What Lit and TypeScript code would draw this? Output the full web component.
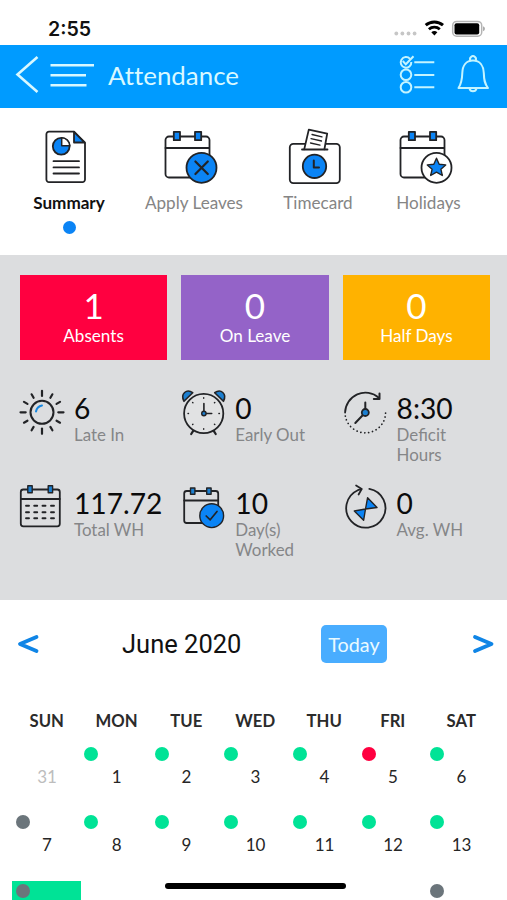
import { LitElement, html, css, svg } from "lit";
import { customElement } from "lit/decorators.js";

const BLUE = "#0b84f5";
const INK = "#222326";

const icon = (x: number, y: number, w: number, h: number, body: unknown) => html`
  <svg width=${w} height=${h} viewBox="${x} ${y} ${w} ${h}" fill="none" stroke=${INK}
    stroke-width="1.8" stroke-linecap="round" stroke-linejoin="round">${body}</svg>`;

const range = (n: number) => Array.from({ length: n }, (_, i) => i);

const calendarBase = svg`
  <rect x="165.5" y="136.5" width="44" height="41" rx="3.5"/>
  <path d="M165.5 148H209"/>
  <rect x="173.8" y="131.8" width="6.2" height="8.4" fill=${BLUE}/>
  <rect x="195" y="131.8" width="6.2" height="8.4" fill=${BLUE}/>`;

const tabs = [
  {
    label: "Summary",
    active: true,
    icon: icon(43, 126, 52, 60, svg`
      <path d="M49 131.6H74L85 143V179.5a2.6 2.6 0 0 1-2.6 2.6H49a2.6 2.6 0 0 1-2.6-2.6V134.2a2.6 2.6 0 0 1 2.6-2.6z"/>
      <path d="M74 131.8V142.5H84.8z" fill=${BLUE}/>
      <circle cx="61.2" cy="146.3" r="8.4" fill=${BLUE}/>
      <path d="M61.7 137.7V145.8H69.8A8.4 8.4 0 0 0 61.7 137.7z" fill="#fff" stroke-width="1.5"/>
      <path d="M53.5 161.2H79M53.5 167.4H79M53.5 173.5H79"/>`),
  },
  {
    label: "Apply Leaves",
    icon: icon(163, 126, 62, 60, svg`
      ${calendarBase}
      <circle cx="201.5" cy="167.8" r="15" fill=${BLUE}/>
      <path d="M195.4 161.5L207.8 174M207.8 161.5L195.4 174" stroke-width="2.2"/>`),
  },
  {
    label: "Timecard",
    icon: icon(287, 126, 62, 60, svg`
      <rect x="289.8" y="143.8" width="50" height="39.3" rx="3.5"/>
      <path d="M304.2 149.4L308.8 129.6L327.2 133.6L324.4 149.4" fill="#fff"/>
      <path d="M302 149.5H327.5"/>
      <path d="M312 134.5L322 136.8M311 138.7L321.5 141M310.5 143L320 145.2" stroke-width="1.3"/>
      <circle cx="314.5" cy="166.3" r="11.7" fill=${BLUE}/>
      <path d="M313.8 160.5V167.5H319" stroke-width="2"/>`),
  },
  {
    label: "Holidays",
    icon: icon(397.5, 126, 62, 60, svg`
      <g transform="translate(234.5 0)">${calendarBase}</g>
      <circle cx="436" cy="167.8" r="15" fill="#fff"/>
      <path d="M436 158.2L438.7 164.2L445.2 164.9L440.4 169.2L441.8 175.5L436 172.2L430.2 175.5L431.6 169.2L426.8 164.9L433.3 164.2z" fill=${BLUE} stroke-width="1.4"/>`),
  },
];

const cards = [
  { value: "1", label: "Absents", tone: "red" },
  { value: "0", label: "On Leave", tone: "purple" },
  { value: "0", label: "Half Days", tone: "amber" },
];

const stats = [
  {
    value: "6",
    label: "Late In",
    icon: icon(18, 387, 52, 50, svg`
      <circle cx="42" cy="412.3" r="11.5" stroke-width="2"/>
      <path d="M36 411.5A7.5 7.5 0 0 1 42 405.5" stroke="#1687e0" stroke-width="2"/>
      ${range(12).map((i) => svg`<path d=${i % 3 ? "M42 395.5V391.5" : "M42 396V390.8"} stroke-width="2.2" transform="rotate(${i * 30} 42 412.3)"/>`)}`),
  },
  {
    value: "0",
    label: "Early Out",
    icon: icon(179.3, 387, 52, 50, svg`
      <path d="M184.3 401.3C180.3 393.5 187 388.5 193 392.7z" fill="#1c7fd0" stroke-width="1.6"/>
      <path d="M223.7 401.3C227.7 393.5 221 388.5 215 392.7z" fill="#1c7fd0" stroke-width="1.6"/>
      <path d="M193.5 430.8L191.5 434M214 430.8L216 434" stroke-width="2.2"/>
      <circle cx="204" cy="413.5" r="19.6" fill="#e1e2e3"/>
      ${range(8).map((i) => svg`<path d="M204 397.8V398.3" stroke-width="1.4" transform="rotate(${i * 45} 204 413.5)"/>`)}
      <path d="M204.2 403.5V413.5H212" stroke-width="1.6"/>
      <circle cx="204.2" cy="413.5" r="2.2" fill="#1c7fd0" stroke-width="1.4"/>`),
  },
  {
    value: "8:30",
    label: "Deficit Hours",
    icon: icon(340.7, 387, 52, 50, svg`
      <path d="M344.8 412.5A20.3 20.3 0 0 1 378.5 397.7"/>
      <path d="M379.2 393.5V399H373.5" stroke-width="2"/>
      <path d="M345 416A20.3 20.3 0 0 0 385.3 412.5" stroke-width="1.7" stroke-dasharray="0.1 3.85"/>
      <path d="M365 402.5V412.5L355 423" stroke-width="2"/>
      <circle cx="365" cy="412.5" r="3.5" fill="#1c7fd0"/>`),
  },
  {
    value: "117.72",
    label: "Total WH",
    icon: icon(18, 482, 52, 50, svg`
      <rect x="20.8" y="489.5" width="39" height="36.8" rx="2.5"/>
      <path d="M20.8 499H59.8"/>
      <rect x="27.8" y="485.8" width="4.4" height="7" fill="#1c7fd0" stroke-width="1.4"/>
      <rect x="48.2" y="485.8" width="4.4" height="7" fill="#1c7fd0" stroke-width="1.4"/>
      ${[505.8, 512.2, 518.3].map((y) => svg`<path d="M26 ${y}H29M34.2 ${y}H37.2M42.5 ${y}H45.5M51 ${y}H54" stroke-width="1.9"/>`)}`),
  },
  {
    value: "10",
    label: "Day(s) Worked",
    icon: icon(179.3, 482, 52, 50, svg`
      <rect x="184.5" y="491" width="34" height="32" rx="2.5"/>
      <path d="M184.5 500.5H218.5"/>
      <rect x="190.8" y="488" width="4.4" height="6.2" fill="#1c7fd0" stroke-width="1.4"/>
      <rect x="207" y="488" width="4.4" height="6.2" fill="#1c7fd0" stroke-width="1.4"/>
      <circle cx="212" cy="515.7" r="11.9" fill=${BLUE} stroke-width="1.4"/>
      <path d="M206.5 516L210.5 519.8L217.3 511.5" stroke-width="1.7"/>`),
  },
  {
    value: "0",
    label: "Avg. WH",
    icon: icon(340.7, 482, 52, 50, svg`
      <path d="M369 488.8A19.6 19.6 0 1 1 357.5 490.2L361 489.2"/>
      <path d="M355.8 485.5L361.5 488.9L358.3 494.5"/>
      <path d="M367.3 497.7L376.7 507.5L365.2 509L354 511L363.3 520.3L365.2 509z" fill=${BLUE} stroke-width="1.4"/>`),
  },
];

const weekdays = ["SUN", "MON", "TUE", "WED", "THU", "FRI", "SAT"];

type Day = { n?: number; dot?: string; outside?: boolean; today?: boolean };

const days: Day[] = [
  { n: 31, outside: true },
  ...[1, 2, 3, 4].map((n) => ({ n, dot: "green" })),
  { n: 5, dot: "red" },
  { n: 6, dot: "green" },
  { n: 7, dot: "gray" },
  ...[8, 9, 10, 11, 12, 13].map((n) => ({ n, dot: "green" })),
  { dot: "gray", today: true },
  {}, {}, {}, {}, {},
  { dot: "gray" },
];

@customElement("app-root")
export class AppRoot extends LitElement {
  static styles = css`
    :host {
      display: block;
      position: relative;
      width: 507px;
      height: 900px;
      overflow: hidden;
      background: #fff;
      color: #111;
      font-family: Lato, sans-serif;
    }
    svg { display: block; flex: none; }
    .status {
      display: flex;
      align-items: center;
      box-sizing: border-box;
      height: 44.5px;
      padding: 13px 21px 0 48px;
      justify-content: space-between;
    }
    .time { font: 600 19.6px/30px Inter, sans-serif; }
    .bar {
      display: flex;
      align-items: center;
      height: 63.5px;
      padding: 0 15px;
      background: #009bff;
      color: #d8f8ff;
    }
    .title {
      flex: 1;
      margin: -2px 0 0 13px;
      font-size: 25.9px;
      font-variant-ligatures: none;
    }
    .tabs {
      display: grid;
      grid-template-columns: 138px 112px 136px 85px;
      height: 129px;
      padding-top: 18px;
    }
    .tab {
      display: flex;
      flex-direction: column;
      align-items: center;
      color: #858585;
      font-size: 17.1px;
      line-height: 22px;
      white-space: nowrap;
    }
    .tab-label { margin-top: 6px; }
    .active { color: #111; font-weight: 700; }
    .marker { width: 13px; height: 13px; margin-top: 7px; border-radius: 50%; background: #0b84f5; }
    .summary {
      box-sizing: border-box;
      height: 345px;
      padding: 20px 17px 0 20px;
      background: #dcdddf;
    }
    .cards { display: grid; grid-template-columns: repeat(3, 1fr); gap: 14.3px; }
    .card {
      display: flex;
      flex-direction: column;
      align-items: center;
      height: 85px;
      color: #fff;
    }
    .card-value { margin-top: 9px; font-size: 35px; line-height: 42px; }
    .card-label { font-size: 17.1px; line-height: 20px; }
    .red { background: #ff0040; }
    .purple { background: #9463c8; }
    .amber { background: #ffb200; }
    .stats {
      display: grid;
      grid-template-columns: repeat(3, 161.3px);
      grid-auto-rows: 95px;
      margin: 27px 0 0 -2px;
    }
    .stat { display: flex; }
    .stat-text { width: 90px; padding-top: 5px; margin-left: 4px; }
    .stat-value { color: #0b0b0c; font-size: 28.2px; line-height: 32px; }
    .stat-label { margin-top: 1px; color: #858688; font-size: 16.9px; line-height: 20.3px; }
    .month {
      display: flex;
      align-items: center;
      height: 88px;
      padding: 0 13px 0 17px;
    }
    .month-name { width: 199px; margin-left: 83px; font: 25.5px/30px Roboto, sans-serif; }
    .today-btn {
      width: 66px;
      height: 38px;
      margin-right: auto;
      border-radius: 5px;
      background: #49adff;
      color: #e9faff;
      font-size: 19.8px;
      line-height: 39px;
      text-align: center;
    }
    .grid {
      display: grid;
      grid-template-columns: 68.5px 71px 68.5px 69.5px 68.5px 68.5px 68.5px;
      margin-left: 12px;
    }
    .weekdays { height: 56px; align-items: center; text-align: center; font-size: 16.7px; font-weight: 700; color: #2b2b2b; }
    .weekday { padding: 9px 0 0 1px; }
    .days { grid-auto-rows: 68.3px; }
    .day { display: flex; flex-direction: column; color: #262626; font-size: 17px; }
    .dot { width: 14px; height: 14px; margin: 3px 0 0 3.5px; border-radius: 50%; }
    .green { background: #00e396; }
    .gray { background: #6b757b; }
    .num { padding: 6px 0 0 1.5px; text-align: center; line-height: 20px; }
    .outside { color: #bdbdbd; }
    .today { background: #00e396; }
    .home {
      position: absolute;
      left: 165px;
      bottom: 11px;
      width: 181px;
      height: 6px;
      border-radius: 3px;
      background: #000;
    }
  `;

  render() {
    return html`
      <div class="status">
        <span class="time">2:55</span>
        <svg width="94" height="20" viewBox="392 19 94 20" fill="none">
          ${[396.3, 402.4, 408.5, 414.6].map((x) => svg`<circle cx=${x} cy="33.5" r="1.9" fill="#c6c6c6"/>`)}
          <path d="M425.7 25.2A13.1 13.1 0 0 1 443 25.2" stroke="#000" stroke-width="3"/>
          <path d="M428.9 29.2A8.1 8.1 0 0 1 439.8 29.2" stroke="#000" stroke-width="2.8"/>
          <path d="M431.3 32.3A4.5 4.5 0 0 1 437.4 32.3L434.4 35.5z" fill="#000"/>
          <rect x="452.7" y="21.4" width="29" height="14.8" rx="4" stroke="#b4b4b4" stroke-width="1.5"/>
          <rect x="454.5" y="23.2" width="24.7" height="11.2" rx="2" fill="#000"/>
          <path d="M483 26.3Q485 27 485 28.8T483 31.3z" fill="#aaa"/>
        </svg>
      </div>
      <div class="bar">
        <svg width="80" height="44" viewBox="15 54 80 44" fill="none" stroke="#d8f8ff" stroke-width="2.6">
          <path d="M37.5 57L17.5 74.5L37.5 92"/>
          <path d="M50.5 65.2H94M50.5 75.2H86M50.5 85.2H86.5" stroke-width="2.4"/>
        </svg>
        <span class="title">Attendance</span>
        <svg width="95" height="44" viewBox="397 54 95 44" fill="none" stroke="#c4f4ff" stroke-width="2">
          <path d="M410 58.9A5.3 5.3 0 1 0 411.3 62"/>
          <path d="M402.8 61L405.8 64.3L413.5 56.3"/>
          <circle cx="406" cy="74.8" r="5.3"/>
          <circle cx="406" cy="87.3" r="5.3"/>
          <path d="M414.3 62.2H434.3M414.3 75H434.3M414.3 87.3H434.3"/>
          <path d="M470.8 61A2.9 2.9 0 1 1 475.2 61"/>
          <path stroke-linejoin="round" d="M473 60.5C466 60.5 462.5 66 462.3 73C462.1 80 461.5 83.5 458.5 88H488C484.5 83.5 484 80 483.8 73C483.5 66 480 60.5 473 60.5z"/>
          <path d="M469.5 88.5A3.6 3.6 0 0 0 476.5 88.5"/>
        </svg>
      </div>
      <div class="tabs">
        ${tabs.map((t) => html`
          <div class="tab ${t.active ? "active" : ""}">
            ${t.icon}
            <span class="tab-label">${t.label}</span>
            ${t.active ? html`<span class="marker"></span>` : ""}
          </div>`)}
      </div>
      <div class="summary">
        <div class="cards">
          ${cards.map((c) => html`
            <div class="card ${c.tone}">
              <span class="card-value">${c.value}</span>
              <span class="card-label">${c.label}</span>
            </div>`)}
        </div>
        <div class="stats">
          ${stats.map((s) => html`
            <div class="stat">
              ${s.icon}
              <div class="stat-text">
                <div class="stat-value">${s.value}</div>
                <div class="stat-label">${s.label}</div>
              </div>
            </div>`)}
        </div>
      </div>
      <div class="month">
        <svg width="22" height="24" viewBox="17 632 22 24" fill="none" stroke="#0f85e6" stroke-width="3.8" stroke-linecap="round" stroke-linejoin="round">
          <path d="M36.5 637L20 644L36.5 651"/>
        </svg>
        <span class="month-name">June 2020</span>
        <span class="today-btn">Today</span>
        <svg width="22" height="24" viewBox="472 632 22 24" fill="none" stroke="#0f85e6" stroke-width="3.8" stroke-linecap="round" stroke-linejoin="round">
          <path d="M475 637L491.5 644L475 651"/>
        </svg>
      </div>
      <div class="grid weekdays">${weekdays.map((d) => html`<span class="weekday">${d}</span>`)}</div>
      <div class="grid days">
        ${days.map((d) => html`
          <div class="day ${d.today ? "today" : ""}">
            <span class="dot ${d.dot ?? ""}"></span>
            <span class="num ${d.outside ? "outside" : ""}">${d.n ?? ""}</span>
          </div>`)}
      </div>
      <div class="home"></div>
    `;
  }
}
